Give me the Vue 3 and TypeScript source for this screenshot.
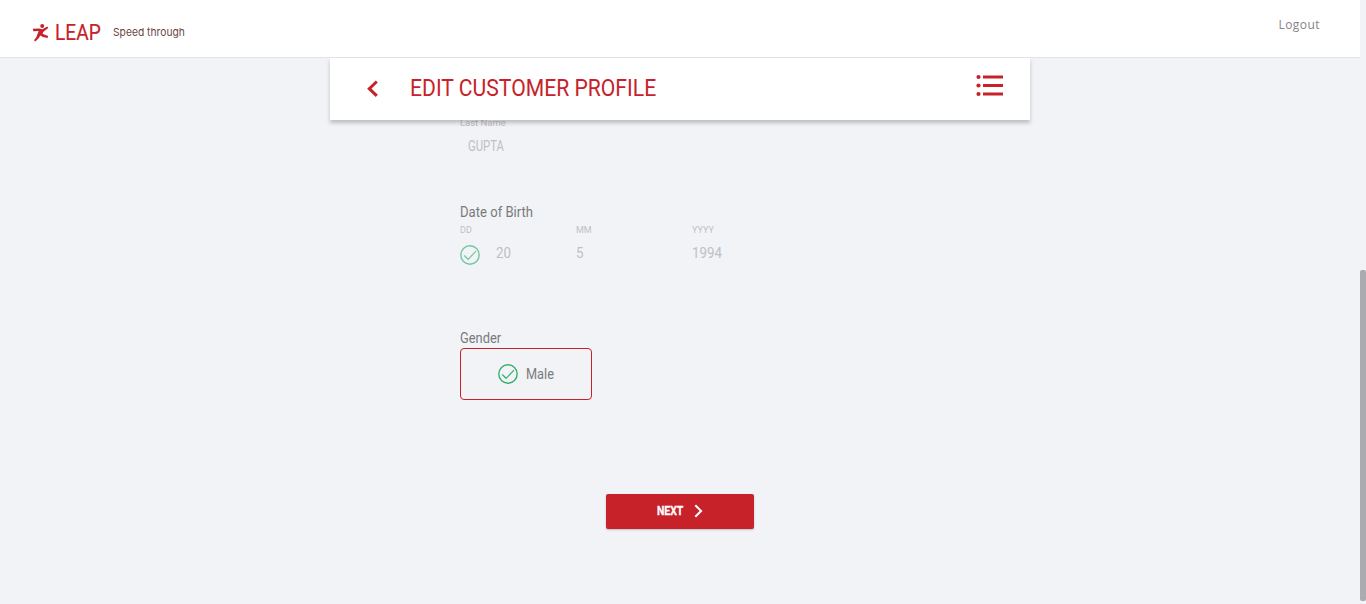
<script setup lang="ts">
interface DatePart {
  label: string
  value: string
}

const dateParts: DatePart[] = [
  { label: 'DD', value: '20' },
  { label: 'MM', value: '5' },
  { label: 'YYYY', value: '1994' },
]
</script>

<template>
  <div class="page">
    <header class="topbar">
      <div class="brand">
        <svg class="runner" width="17" height="18" viewBox="0 0 17 18" aria-hidden="true">
          <circle cx="10.2" cy="2" r="2" />
          <path d="M.9 4.8 7 4.5l3.4.8 4.900-2.700 1 1.300-4.900 3.900-.9 2 2.300 1 3.300 1.300-.4 1.900-4.800-1-2.600-1.400-1.600 2.700-3.400 3.100-1.300-1.200 2.300-2.900 1.500-4 .9-2.200-5.500.2z" />
        </svg>
        <span class="name">LEAP</span>
        <span class="tagline">Speed through</span>
      </div>
      <a class="logout">Logout</a>
    </header>

    <div class="column">
      <div class="titlebar">
        <svg class="back" width="12" height="18" viewBox="0 0 12 18" aria-hidden="true">
          <path d="M9.800 1.500 2.300 8.700l7.500 7.200" />
        </svg>
        <h1><span>EDIT CUSTOMER PROFILE</span></h1>
        <svg class="list" width="27" height="23" viewBox="0 0 27 23" aria-hidden="true">
          <g v-for="y in [3, 11.5, 20]" :key="y">
            <circle cx="2.5" :cy="y" r="2.1" />
            <rect x="7" :y="y - 1.5" width="20" height="3" />
          </g>
        </svg>
      </div>

      <main class="form">
        <section class="last-name">
          <div class="small"><span class="wide">Last Name</span></div>
          <div class="value">GUPTA</div>
        </section>

        <section class="birth">
          <div class="label">Date of Birth</div>
          <div class="parts">
            <div v-for="(part, i) in dateParts" :key="part.label" class="part">
              <div class="small"><span>{{ part.label }}</span></div>
              <div class="row">
                <svg v-if="i === 0" class="check faded" width="20" height="20" viewBox="0 0 20 20" aria-hidden="true">
                  <circle cx="10" cy="10" r="9.2" />
                  <path d="m4.2 10.500 3.900 3.800 7.900-8.200" />
                </svg>
                <span class="value">{{ part.value }}</span>
              </div>
            </div>
          </div>
        </section>

        <section class="gender">
          <div class="label">Gender</div>
          <div class="choice">
            <svg class="check" width="20" height="20" viewBox="0 0 20 20" aria-hidden="true">
              <circle cx="10" cy="10" r="9.2" />
              <path d="m4.2 10.500 3.900 3.800 7.900-8.200" />
            </svg>
            <span class="male">Male</span>
          </div>
        </section>
      </main>

      <button class="next" type="button">
        <span>NEXT</span>
        <svg width="9" height="14" viewBox="0 0 9 14" aria-hidden="true">
          <path d="m1.3 1.2 5.800 5.800-5.800 5.800" />
        </svg>
      </button>
    </div>

    <div class="scroll-track"><div class="scroll-thumb"></div></div>
  </div>
</template>

<style>
html,
body {
  margin: 0;
  overflow: hidden;
  background: #f1f3f7;
}
</style>

<style scoped>
.page {
  position: relative;
  width: 1366px;
  height: 604px;
  overflow: hidden;
  background: #f1f3f7;
  font-family: Roboto, "Liberation Sans", sans-serif;
  color: #7a7a7b;
}

span,
.label,
.value {
  transform-origin: left center;
  white-space: nowrap;
}

.topbar {
  position: relative;
  z-index: 2;
  display: flex;
  justify-content: space-between;
  box-sizing: border-box;
  width: 1360px;
  height: 58px;
  padding: 0 40px 0 32px;
  background: #fff;
  border-bottom: 1px solid #e2e3e7;
}

.brand {
  display: flex;
  align-items: flex-start;
}

.runner {
  margin-top: 24px;
  fill: #c72229;
}

.name {
  width: 57px;
  margin: 19px 0 0 5.5px;
  font-size: 22.5px;
  line-height: 26px;
  color: #c72229;
  -webkit-text-stroke: 0.2px #c72229;
  transform: scaleX(0.85);
}

.tagline {
  margin: 24px 0 0 1.5px;
  font-family: Inter, sans-serif;
  font-size: 11px;
  line-height: 16px;
  color: #6b4542;
  transform: scaleX(0.935);
}

.logout {
  margin-top: 17px;
  font-family: "Open Sans", sans-serif;
  font-size: 12px;
  line-height: 16px;
  letter-spacing: 0.45px;
  color: #858585;
}

.column {
  width: 700px;
  margin-left: 330px;
}

.titlebar {
  position: relative;
  z-index: 1;
  display: flex;
  box-sizing: border-box;
  height: 62px;
  padding: 0 27px 0 37px;
  background: #fff;
  box-shadow: 0 3px 4px rgba(0, 0, 0, 0.22);
}

.back {
  margin-top: 22px;
  fill: none;
  stroke: #c72229;
  stroke-width: 3;
}

h1 {
  flex: 1;
  margin: 15px 0 0 31px;
  font-size: 24px;
  font-weight: 400;
  line-height: 30px;
  color: #c72229;
}

h1 span {
  display: inline-block;
  transform: scaleX(0.881);
}

.list {
  margin-top: 16px;
  fill: #c72229;
}

.form {
  height: 377px;
  padding-left: 130px;
}

.last-name {
  height: 81px;
  margin-top: -3px;
}

.small {
  font-size: 9px;
  line-height: 12px;
  color: #bfc0c3;
}

.small span {
  display: inline-block;
}

.small .wide {
  transform: scaleX(1.05);
}

.value {
  font-size: 14px;
  line-height: 18px;
  color: #bfc0c3;
}

.last-name .value {
  width: 60px;
  margin: 8px 0 0 8px;
  transform: scaleX(0.81);
}

.birth {
  height: 126px;
  padding-top: 5px;
}

.label {
  width: 100px;
  font-size: 14px;
  line-height: 18px;
  transform: scaleX(0.935);
}

.gender .label {
  transform: scaleX(0.92);
}

.parts {
  display: flex;
  margin-top: 3px;
}

.part {
  width: 116px;
}

.row {
  display: flex;
  margin-top: 9px;
}

.row .value {
  margin-top: -1px;
  transform: scaleX(0.95);
}

.check {
  fill: none;
  stroke: #34b06b;
  stroke-width: 1.4;
}

.check path {
  stroke-width: 1.2;
}

.check.faded {
  opacity: 0.65;
}

.check + .value {
  margin-left: 16px;
}

.choice {
  display: flex;
  align-items: center;
  box-sizing: border-box;
  width: 132px;
  height: 52px;
  margin-top: 1px;
  padding-left: 37px;
  border: 1px solid #c72229;
  border-radius: 4px;
}

.male {
  margin-left: 8px;
  font-size: 14px;
  line-height: 18px;
  transform: scaleX(0.91);
}

.next {
  display: flex;
  align-items: center;
  width: 148px;
  height: 35px;
  margin: 0 0 0 276px;
  padding: 0 0 0 51px;
  border: 0;
  border-radius: 2px;
  background: #c72229;
  box-shadow: 0 1px 2px rgba(0, 0, 0, 0.22);
  font-family: inherit;
  color: #fff;
}

.next span {
  width: 37px;
  margin-top: -1px;
  font-size: 12px;
  font-weight: 700;
  line-height: 16px;
  text-align: left;
  -webkit-text-stroke: 0.3px #fff;
  transform: scaleX(0.87);
}

.next svg {
  margin-top: -2px;
  fill: none;
  stroke: #fff;
  stroke-width: 2;
}

.scroll-track {
  position: absolute;
  top: 0;
  right: 0;
  width: 6px;
  height: 604px;
}

.scroll-thumb {
  height: 331px;
  margin-top: 270px;
  border-radius: 2px;
  background: #a9abb0;
}
</style>
